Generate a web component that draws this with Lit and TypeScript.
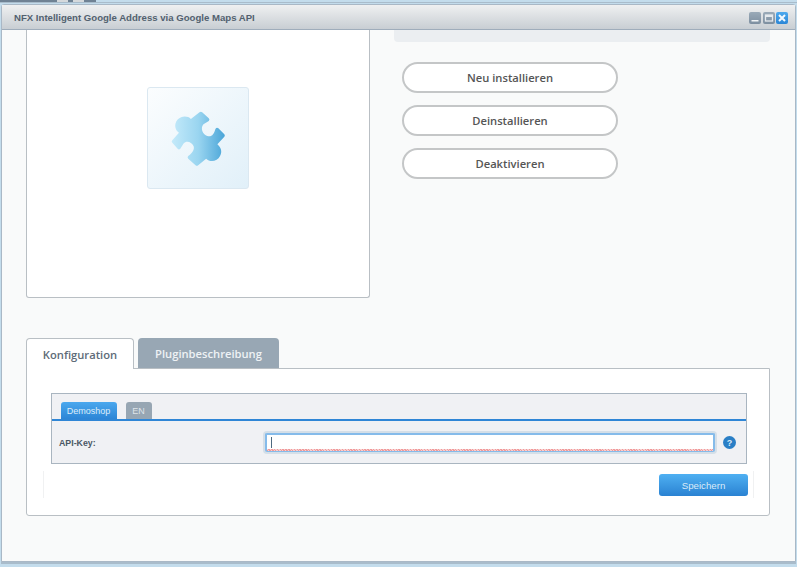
import { LitElement, html, css } from "lit";
import { customElement } from "lit/decorators.js";

@customElement("app-root")
export class AppRoot extends LitElement {
  static styles = css`
    :host { display: block; width: 797px; height: 567px; overflow: hidden; background: #c3dcec; font-family: "Liberation Sans", Arial, sans-serif; }
    * { box-sizing: border-box; }
    .strip { height: 3px; display: flex; border-bottom: 1px solid #a9bccb; }
    .strip-dark { width: 96px; height: 2px; background: #6f8294; display: flex; padding-left: 57px; gap: 5px; }
    .strip-dark i { width: 11px; height: 2px; background: #d5d9dc; display: block; }
    .window { margin: 1px 1px 0 1px; width: 795px; height: 558px; border: 1px solid #a9b8c6; border-radius: 3px 3px 0 0; background: #f9fafa; display: flex; flex-direction: column; box-shadow: 0 2px 0 #a9bccb; }
    .head { height: 25px; flex: none; display: flex; align-items: center; justify-content: space-between; padding: 0 7px 0 12px; background: linear-gradient(#eff0f1, #c8ced3); border-bottom: 1px solid #9fadbb; }
    .title { font-size: 9.6px; font-weight: 700; color: #52616f; }
    .win-btns { display: flex; gap: 2px; margin-top: 2px; }
    .win-btn { width: 12px; height: 12px; border-radius: 2px; background: linear-gradient(#9aaab8, #7d8fa0); display: flex; }
    .win-btn svg { display: block; }
    .win-btn.close { margin-left: -1px; background: linear-gradient(#4da9ee, #2a86d6); }
    .body { flex: 1; padding: 0 24px; display: flex; flex-direction: column; }
    .top { display: flex; height: 268px; flex: none; }
    .card { width: 344px; height: 268px; flex: none; background: #fff; border: 1px solid #b9bfc4; border-top: none; border-radius: 0 0 3px 3px; display: flex; align-items: center; justify-content: center; padding-bottom: 51px; }
    .thumb { width: 102px; height: 102px; border: 1px solid #dbe8f1; border-radius: 3px; background: linear-gradient(135deg, #fbfdfe, #e1f0f9); display: flex; align-items: center; justify-content: center; }
    .side { flex: 1; padding-left: 24px; }
    .notice { height: 12px; margin-right: 1px; background: #ebeef1; border-radius: 0 0 4px 4px; }
    .actions { display: flex; flex-direction: column; gap: 12px; margin: 20px 0 0 8px; }
    .pill { width: 216px; height: 31px; border: 2px solid #c4c6c7; border-radius: 16px; background: #fff; color: #555; font: 600 11.2px "Open Sans", sans-serif; display: flex; align-items: center; justify-content: center; padding: 0; }
    .tabs { display: flex; gap: 4px; margin-top: 40px; height: 31px; flex: none; position: relative; z-index: 1; }
    .tab { height: 30px; display: flex; align-items: center; justify-content: center; font: 600 11.2px "Open Sans", sans-serif; border-radius: 4px 4px 0 0; }
    .tab.on { width: 108px; height: 31px; background: #fff; border: 1px solid #b9bfc4; border-bottom: none; color: #5e6b78; }
    .tab.off { width: 141px; background: #98a7b4; color: #eef2f5; }
    .panel { width: 744px; height: 148px; margin-top: -1px; background: #fff; border: 1px solid #b9bfc4; border-radius: 0 0 3px 3px; padding: 24px 22px 0 24px; }
    .form { height: 71px; border: 1px solid #a9b5c0; background: #f0f1f4; }
    .shop-tabs { height: 27px; display: flex; align-items: flex-end; gap: 9px; padding-left: 9px; border-bottom: 2px solid #2f86d6; }
    .shop-tab { height: 17px; font-size: 9px; display: flex; align-items: center; justify-content: center; border-radius: 3px 3px 0 0; padding-right: 1px; }
    .shop-tab.on { width: 56px; background: linear-gradient(#4aa8ee, #2c85d6); color: #dcecf9; }
    .shop-tab.off { width: 26px; background: #97a6b3; color: #dfe5ea; }
    .row { display: flex; align-items: center; height: 41px; padding: 2px 0 0 7px; }
    .label { width: 206px; font-size: 8.8px; font-weight: 700; color: #4a5865; }
    .input { width: 450px; height: 19px; border: 2px solid #85bbea; border-bottom: none; border-radius: 2px; background: #fff; box-shadow: 0 0 0 2px #d5dfe8; display: flex; align-items: center; padding-left: 4px; position: relative; }
    .input::after { content: ""; position: absolute; left: 0; right: 0; bottom: 1px; height: 2px; background: repeating-linear-gradient(45deg, #f09a9a 0 1px, #f8d0d0 1px 2px); box-shadow: 0 1px 0 #85bbea; }
    .caret { width: 1px; height: 11px; background: #4d6a80; margin-top: -2px; }
    .help { width: 13px; height: 13px; border-radius: 50%; margin-left: 8px; background: #2a7fc6; color: #dcecf9; font-size: 9px; font-weight: 700; display: flex; align-items: center; justify-content: center; }
    .foot { height: 27px; margin: 7px 0 0 -8px; width: 711px; border-left: 1px solid #f0f1f2; border-right: 1px solid #f0f1f2; padding: 3px 5px 0 0; display: flex; justify-content: flex-end; }
    .save { width: 89px; height: 22px; border-radius: 3px; background: linear-gradient(#4fb0f2, #2a82d2); color: #d9ebf9; font-size: 9.7px; display: flex; align-items: center; justify-content: center; }
  `;

  render() {
    return html`
      <div class="strip"><div class="strip-dark"><i></i><i></i></div></div>
      <div class="window">
        <div class="head">
          <div class="title">NFX Intelligent Google Address via Google Maps API</div>
          <div class="win-btns">
            <div class="win-btn"><svg width="12" height="12" viewBox="0 0 12 12"><rect x="2.5" y="8" width="7" height="1.5" fill="#f0f3f5"/></svg></div>
            <div class="win-btn"><svg width="12" height="12" viewBox="0 0 12 12"><rect x="2.5" y="3" width="7" height="6" fill="none" stroke="#e4e9ed" stroke-width="1.3"/><rect x="2.5" y="3" width="7" height="2" fill="#e4e9ed"/></svg></div>
            <div class="win-btn close"><svg width="12" height="12" viewBox="0 0 12 12"><path d="M3 3l6 6M9 3l-6 6" stroke="#f2f8fd" stroke-width="2"/></svg></div>
          </div>
        </div>
        <div class="body">
          <div class="top">
            <div class="card">
              <div class="thumb">
                <svg width="57" height="58" viewBox="120 100 170 175">
                  <defs><linearGradient id="pz" x1="0" y1="0" x2="1" y2="0"><stop offset="0" stop-color="#c4eafa"/><stop offset="0.5" stop-color="#9ad5f0"/><stop offset="1" stop-color="#4aa5d8"/></linearGradient></defs>
                  <path fill="url(#pz)" d="M208 110Q212 106 216 110L236 128Q240 132 236 136L220 146C210 156 216 178 234 182C246 184 252 174 256 160Q260 154 265 158L283 176Q286 180 283 184L262 206C272 216 278 226 270 242C262 258 240 262 228 250L204 270Q200 273 196 270L174 250Q170 246 174 242C186 234 194 222 190 212C184 198 168 194 160 204L150 220Q146 224 142 220L126 202Q122 198 126 194L146 172C134 164 130 146 142 132C154 120 172 120 182 130Z"/>
                </svg>
              </div>
            </div>
            <div class="side">
              <div class="notice"></div>
              <div class="actions">
                <button class="pill">Neu installieren</button>
                <button class="pill">Deinstallieren</button>
                <button class="pill">Deaktivieren</button>
              </div>
            </div>
          </div>
          <div class="tabs">
            <div class="tab on">Konfiguration</div>
            <div class="tab off">Pluginbeschreibung</div>
          </div>
          <div class="panel">
            <div class="form">
              <div class="shop-tabs">
                <div class="shop-tab on">Demoshop</div>
                <div class="shop-tab off">EN</div>
              </div>
              <div class="row">
                <div class="label">API-Key:</div>
                <div class="input"><div class="caret"></div></div>
                <div class="help">?</div>
              </div>
            </div>
            <div class="foot"><div class="save">Speichern</div></div>
          </div>
        </div>
      </div>
    `;
  }
}
